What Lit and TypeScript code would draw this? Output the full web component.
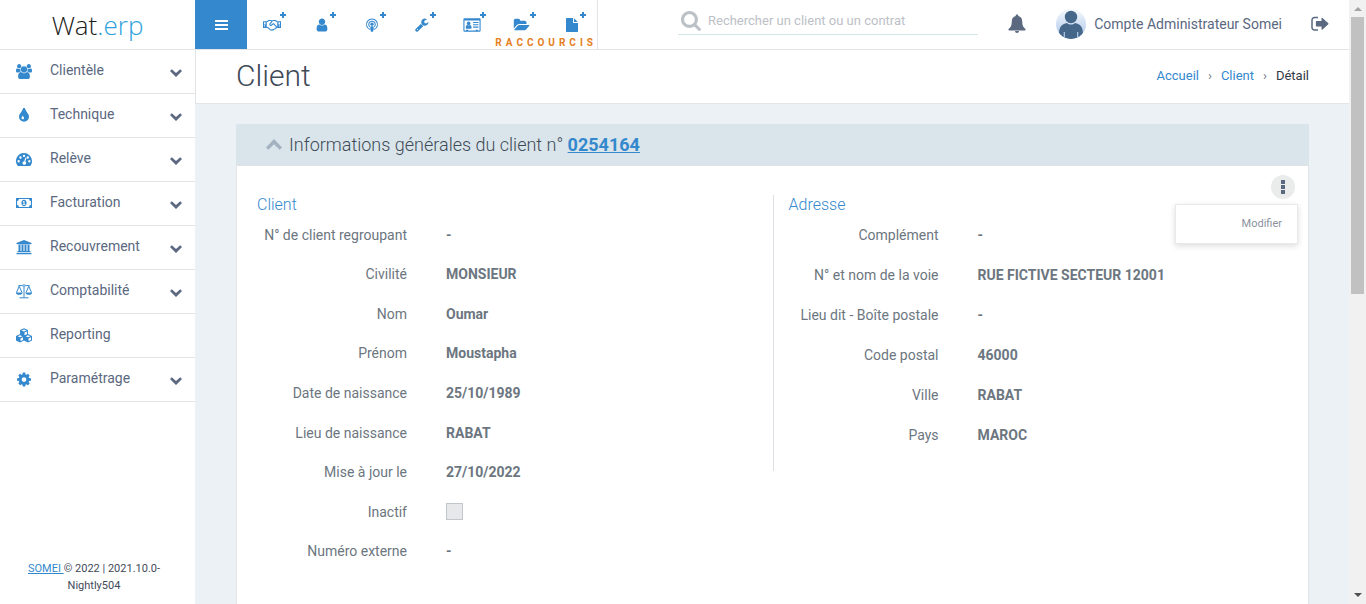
import { LitElement, html, css, svg, nothing, SVGTemplateResult } from "lit";
import { customElement, property, state } from "lit/decorators.js";

interface Glyph {
  box: string;
  body: SVGTemplateResult;
}

const glyphs: Record<string, Glyph> = {
  bars: {
    box: "0 0 13 12",
    body: svg`<path d="M0 1h13v2H0zM0 5h13v2H0zM0 9h13v2H0z"/>`,
  },
  users: {
    box: "-64 0 1920 1792",
    body: svg`<path d="M529 896q-162 5-265 128h-134q-82 0-138-40.500t-56-118.500q0-353 124-353 6 0 43.500 21t97.500 42.500 119 21.500q67 0 133-23-5 37-5 66 0 139 81 256zm1071 637q0 120-73 189.500t-194 69.500h-874q-121 0-194-69.500t-73-189.500q0-53 3.500-103.500t14-109 26.500-108.500 43-97.500 62-81 85.500-53.500 111.500-20q10 0 43 21.500t73 48 107 48 135 21.500 135-21.500 107-48 73-48 43-21.500q61 0 111.500 20t85.500 53.500 62 81 43 97.500 26.500 108.500 14 109 3.500 103.500zm-1024-1277q0 106-75 181t-181 75-181-75-75-181 75-181 181-75 181 75 75 181zm704 384q0 159-112.500 271.500t-271.500 112.500-271.500-112.500-112.500-271.500 112.500-271.500 271.500-112.500 271.500 112.500 112.500 271.500zm576 225q0 78-56 118.500t-138 40.500h-134q-103-123-265-128 81-117 81-256 0-29-5-66 66 23 133 23 59 0 119-21.500t97.500-42.500 43.500-21q124 0 124 353zm-128-609q0 106-75 181t-181 75-181-75-75-181 75-181 181-75 181 75 75 181z"/>`,
  },
  tint: {
    box: "0 128 1792 1536",
    body: svg`<path d="M896 1152q0-36-20-69-1-1-15.500-22.500t-25.500-38-25-44-21-50.500q-4-16-21-16t-21 16q-7 23-21 50.500t-25 44-25.500 38-15.500 22.500q-20 33-20 69 0 53 37.500 90.500t90.500 37.500 90.500-37.500 37.500-90.500zm512-128q0 212-150 362t-362 150-362-150-150-362q0-145 81-275 6-9 62.500-90.500t101-151 99.500-178 83-201.500q9-30 34-47t51-17 51.500 17 33.500 47q28 93 83 201.500t99.500 178 101 151 62.500 90.500q81 127 81 275z"/>`,
  },
  gauge: {
    box: "0 0 16 14",
    body: svg`<path fill-rule="evenodd" d="M8 1a7.500 7.500 0 0 1 7.500 7.500c0 1.600-.5 3.100-1.300 4.200-.2.200-.4.300-.7.300h-11c-.3 0-.5-.1-.7-.3A7.500 7.500 0 0 1 8 1zM3 7.500a1.100 1.100 0 1 0 0 2.200 1.100 1.100 0 0 0 0-2.200zM4.700 4a1.100 1.100 0 1 0 0 2.200 1.100 1.100 0 0 0 0-2.200zM8 2.500a1.100 1.100 0 1 0 0 2.200 1.100 1.100 0 0 0 0-2.200zM11.500 4a1.100 1.100 0 1 0 0 2.200 1.100 1.100 0 0 0 0-2.200zM13 7.500a1.100 1.100 0 1 0 0 2.200 1.100 1.100 0 0 0 0-2.200zM9.200 5.200 8.300 8.600A1.700 1.700 0 1 0 9.300 8.900l.9-3.400z"/>`,
  },
  money: {
    box: "-1 -1 18 14",
    body: svg`<path fill-rule="evenodd" d="M0 .5h16v10H0zM3 1.600A2 2 0 0 1 1.100 3.500v4A2 2 0 0 1 3 9.400h10a2 2 0 0 1 1.900-1.900v-4A2 2 0 0 1 13 1.600zM8 2.300c1.600 0 2.600 1.500 2.600 3.200S9.600 8.700 8 8.700 5.400 7.200 5.400 5.500 6.400 2.300 8 2.300zM7.700 3.500l-1.200 1 .5.600.6-.4v2.100h-.9v.8h2.700v-.8h-.9V3.500z"/>`,
  },
  bank: {
    box: "0 0 16 15",
    body: svg`<path d="M8 0l7.500 3v1h-1c0 .3-.2.500-.5.500H2c-.3 0-.5-.2-.5-.5h-1V3zM2.500 5h2v6h1V5h2v6h1V5h2v6h1V5h2v6h.5c.3 0 .5.200.5.500v.5h-13v-.5c0-.3.200-.5.500-.5h.5zM1 12.800h14c.3 0 .5.200.5.500v1H.5v-1c0-.3.200-.5.500-.5z"/>`,
  },
  scales: {
    box: "0 0 17 15",
    body: svg`<path fill="none" stroke="currentColor" stroke-width="1" d="M3 1.600h4.300M9.700 1.600H14M8.500 2.600v10.900M4 13.800h9M1 8.500l2.700-6.300 2.800 6.300M10.500 8.500l2.800-6.300L16 8.500"/><circle cx="8.500" cy="1.600" r="1" fill="none" stroke="currentColor" stroke-width=".8"/><path d="M.3 8.500h6.700c0 1.500-1.500 2.300-3.300 2.300S.3 10 .3 8.500zM10 8.500h6.700c0 1.500-1.500 2.300-3.300 2.300S10 10 10 8.500z"/>`,
  },
  cubes: {
    box: "0 0 18 15",
    body: svg`<path fill-rule="evenodd" d="M9 .3l3.900 1.600v4.200L17 7.900v4.500l-4 2-4-2-4 2-4-2V7.900l4.100-1.800V1.900zM9 1.400 6.500 2.400 9 3.500l2.500-1.100zM9.500 4.600v2.700l2.400-1V3.500zM5 7.200 2.600 8.200 5 9.300l2.500-1.100zM5.500 10.400v2.700l2.500-1.200V9.300zM13 7.200l-2.400 1L13 9.300l2.500-1.100zM13.500 10.400v2.700l2.500-1.200V9.300z"/>`,
  },
  cog: {
    box: "64 64 1664 1664",
    body: svg`<path d="M1152 896q0-106-75-181t-181-75-181 75-75 181 75 181 181 75 181-75 75-181zm512-109v222q0 12-8 23t-20 13l-185 28q-19 54-39 91 35 50 107 138 10 12 10 25t-9 23q-27 37-99 108t-94 71q-12 0-26-9l-138-108q-44 23-91 38-16 136-29 186-7 28-36 28h-222q-14 0-24.500-8.500t-11.500-21.500l-28-184q-49-16-90-37l-141 107q-10 9-25 9-14 0-25-11-126-114-165-168-7-10-7-23 0-12 8-23 15-21 51-66.500t54-70.500q-27-50-41-99l-183-27q-13-2-21-12.500t-8-23.500v-222q0-12 8-23t19-13l186-28q14-46 39-92-40-57-107-138-10-12-10-24 0-10 9-23 26-36 98.500-107.500t94.500-71.500q13 0 26 10l138 107q44-23 91-38 16-136 29-186 7-28 36-28h222q14 0 24.500 8.500t11.500 21.500l28 184q49 16 90 37l142-107q9-9 24-9 13 0 25 10 129 119 165 170 7 8 7 22 0 12-8 23-15 21-51 66.500t-54 70.500q26 50 41 98l183 28q13 2 21 12.500t8 23.500z"/>`,
  },
  handshake: {
    box: "0 0 20 14",
    body: svg`<path fill="none" stroke="currentColor" stroke-width="1.200" stroke-linejoin="round" d="M4 3.300 6.500 2h2.300l1.200.7L11.300 2h2.200L16 3.300M4 9.500l1.200.2 3 2.700c.8.500 1.500.4 2.200-.2.900.4 1.600.1 2-.7.900.1 1.500-.3 1.700-1.100.9 0 1.300-.7 1-1.400L11.600 5.400 9.300 7.300c-.9.500-2-.3-1.700-1.200L10 2.900M14.800 9.300H16"/><path fill-rule="evenodd" d="M0 2.700h4.200v7.600H0zM1 8a.7.700 0 1 0 1.400 0A.7.700 0 0 0 1 8zM15.800 2.700H20v7.600h-4.200zM17.600 8A.7.700 0 1 0 19 8a.7.700 0 0 0-1.400 0zM1.200 4v2.500h1.600V4zM17.200 4v2.500h1.600V4z"/>`,
  },
  user: {
    box: "128 64 1536 1664",
    body: svg`<path d="M1536 1399q0 109-62.500 187t-150.500 78h-854q-88 0-150.500-78t-62.500-187q0-85 8.500-160.500t31.500-152 58.500-131 94-89 134.500-34.500q131 128 313 128t313-128q76 0 134.500 34.500t94 89 58.500 131 31.500 152 8.500 160.500zm-256-887q0 159-112.500 271.500t-271.500 112.500-271.500-112.500-112.500-271.500 112.500-271.500 271.500-112.500 271.500 112.500 112.500 271.500z"/>`,
  },
  podcast: {
    box: "0 0 14 15",
    body: svg`<path fill="none" stroke="currentColor" stroke-width="1.100" d="M4.800 12.400A5.900 5.900 0 1 1 9.200 12.400M4.600 9.500a3.500 3.500 0 1 1 4.800 0"/><circle cx="7" cy="6.600" r="1.800"/><path d="M5.400 9.400c.8-.6 2.400-.6 3.200 0 .5.500.1 3.300-.3 4.700-.2.800-2.400.8-2.600 0-.4-1.400-.8-4.200-.3-4.700z"/>`,
  },
  wrench: {
    box: "64 64 1728 1728",
    body: svg`<path d="M448 1472q0-26-19-45t-45-19-45 19-19 45 19 45 45 19 45-19 19-45zm644-420l-682 682q-37 37-90 37-52 0-91-37l-106-108q-38-36-38-90 0-53 38-91l681-681q39 98 114.500 173.500t173.500 114.500zm634-435q0 39-23 106-47 134-164.500 217.500t-258.500 83.500q-185 0-316.500-131.500t-131.500-316.500 131.500-316.500 316.500-131.500q58 0 121.500 16.500t107.500 46.500q16 11 16 28t-16 28l-293 169v224l193 107q5-3 79-48.500t135.500-81 70.500-35.500q15 0 23.500 10t8.500 25z"/>`,
  },
  card: {
    box: "0 0 16 13",
    body: svg`<path fill-rule="evenodd" d="M1 .3h14c.6 0 1 .4 1 1v10.400c0 .6-.4 1-1 1H1c-.6 0-1-.4-1-1V1.300c0-.6.400-1 1-1zM1 2.300v9.400h14V2.300z"/><circle cx="4.900" cy="5" r="1.700"/><path d="M2.200 9.300c0-1.800.5-2.800 1.500-2.800.7.600 1.700.6 2.400 0 1 0 1.500 1 1.500 2.800 0 .4-.3.700-.7.700h-4c-.4 0-.7-.3-.7-.7zM9 3.600h5v1H9zM9 5.800h5v1H9zM9 8h5v1H9zM2.500 11h2v1h-2zM11.500 11h2v1h-2z"/>`,
  },
  folder: {
    box: "-96 128 2176 1536",
    body: svg`<path d="M1879 952q0 31-31 66l-336 396q-43 51-120.500 86.500t-143.500 35.500h-1088q-34 0-60.500-13t-26.500-43q0-31 31-66l336-396q43-51 120.500-86.500t143.500-35.500h1088q34 0 60.500 13t26.500 43zm-343-344v160h-832q-94 0-197 47.500t-164 119.500l-337 396-5 6q0-4-.5-12.500t-.5-12.500v-960q0-92 66-158t158-66h320q92 0 158 66t66 158v32h544q92 0 158 66t66 158z"/>`,
  },
  file: {
    box: "128 0 1536 1792",
    body: svg`<path d="M1152 512v-472q22 14 36 28l408 408q14 14 28 36h-472zm-128 32q0 40 28 68t68 28h544v1056q0 40-28 68t-68 28h-1344q-40 0-68-28t-28-68v-1600q0-40 28-68t68-28h800v544z"/>`,
  },
  plus: {
    box: "0 0 6 6",
    body: svg`<path d="M2 0h2v2h2v2H4v2H2V4H0V2h2z"/>`,
  },
  search: {
    box: "64 128 1664 1664",
    body: svg`<path d="M1216 832q0-185-131.500-316.500t-316.500-131.500-316.500 131.500-131.500 316.500 131.500 316.500 316.500 131.500 316.500-131.500 131.500-316.500zm512 832q0 52-38 90t-90 38q-54 0-90-38l-343-342q-179 124-399 124-143 0-273.500-55.500t-225-150-150-225-55.500-273.500 55.500-273.500 150-225 225-150 273.500-55.500 273.500 55.500 225 150 150 225 55.500 273.500q0 220-124 399l343 343q37 37 37 90z"/>`,
  },
  bell: {
    box: "0 0 18 19",
    body: svg`<path d="M9 .5c.8 0 1.300.5 1.300 1.200v.4c2.500.6 3.800 2.500 3.900 5.100.1 4 .9 6 3 7.500.7.700.3 1.800-.7 1.800H1.500c-1 0-1.400-1.100-.7-1.800 2.100-1.500 2.900-3.500 3-7.500.1-2.600 1.400-4.500 3.900-5.100v-.4C7.700 1 8.200.5 9 .5zM7 17h4a2 2 0 0 1-4 0z"/>`,
  },
  logout: {
    box: "0 0 18 16",
    body: svg`<path fill="none" stroke="currentColor" stroke-width="1.500" d="M7 1.500H3.500A2.500 2.500 0 0 0 1 4v7.500A2.500 2.500 0 0 0 3.500 14H7"/><path d="M10.500 2.300c0-.6.600-.8 1-.4l5.800 5.300c.3.300.3.700 0 1l-5.800 5.300c-.4.400-1 .2-1-.4v-2.600H5.600c-.4 0-.7-.3-.7-.7V5.600c0-.4.300-.7.700-.7h4.900z"/>`,
  },
  down: {
    box: "0 0 12 8",
    body: svg`<path d="M1.800.2 6 4.100 10.200.2 12 2 6 8 0 2z"/>`,
  },
  up: {
    box: "0 0 16 11",
    body: svg`<path d="M8 0l8 8.500-2.300 2.300L8 5.200l-5.700 5.600L0 8.500z"/>`,
  },
  kebab: {
    box: "0 0 4 14",
    body: svg`<path d="M0 0h4v4H0zM0 5h4v4H0zM0 10h4v4H0z"/>`,
  },
  avatar: {
    box: "0 0 30 30",
    body: svg`<defs><linearGradient id="sky" x1="0" y1="0" x2="0" y2="1"><stop offset="0" stop-color="#f6f9fd"/><stop offset="1" stop-color="#a9c4ea"/></linearGradient><clipPath id="disc"><circle cx="15" cy="15" r="15"/></clipPath></defs><g clip-path="url(#disc)"><path fill="url(#sky)" d="M0 0h30v30H0z"/><circle cx="15" cy="8" r="6.200" fill="#456789"/><path fill="#456789" d="M3 24.500C3.300 18 5.500 15 11 14c2.300 2 5.700 2 8 0 5.500 1 7.700 4 8 10.500L26 30H4z"/><path stroke="#b5cbea" stroke-width="1.200" d="M8.300 23v7M21.700 23v7"/></g>`,
  },
};

@customElement("wat-icon")
class WatIcon extends LitElement {
  @property() name = "";

  static styles = css`
    :host {
      display: inline-flex;
      flex: none;
    }
    .glyph {
      display: block;
      width: 100%;
      height: 100%;
      fill: currentColor;
    }
  `;

  render() {
    const glyph = glyphs[this.name];
    if (!glyph) return nothing;
    return html`<svg class="glyph" viewBox=${glyph.box} aria-hidden="true">${glyph.body}</svg>`;
  }
}

const menu = [
  { label: "Clientèle", icon: "users", nested: true },
  { label: "Technique", icon: "tint", nested: true },
  { label: "Relève", icon: "gauge", nested: true },
  { label: "Facturation", icon: "money", nested: true },
  { label: "Recouvrement", icon: "bank", nested: true },
  { label: "Comptabilité", icon: "scales", nested: true },
  { label: "Reporting", icon: "cubes", nested: false },
  { label: "Paramétrage", icon: "cog", nested: true },
];

const shortcuts = [
  { icon: "handshake", label: "Nouveau contrat" },
  { icon: "user", label: "Nouveau client" },
  { icon: "podcast", label: "Nouveau point" },
  { icon: "wrench", label: "Nouvelle intervention" },
  { icon: "card", label: "Nouveau contact" },
  { icon: "folder", label: "Nouveau dossier" },
  { icon: "file", label: "Nouveau document" },
];

const client: [string, string][] = [
  ["N° de client regroupant", "-"],
  ["Civilité", "MONSIEUR"],
  ["Nom", "Oumar"],
  ["Prénom", "Moustapha"],
  ["Date de naissance", "25/10/1989"],
  ["Lieu de naissance", "RABAT"],
  ["Mise à jour le", "27/10/2022"],
];

const address: [string, string][] = [
  ["Complément", "-"],
  ["N° et nom de la voie", "RUE FICTIVE SECTEUR 12001"],
  ["Lieu dit - Boîte postale", "-"],
  ["Code postal", "46000"],
  ["Ville", "RABAT"],
  ["Pays", "MAROC"],
];

@customElement("app-root")
class AppRoot extends LitElement {
  @state() private menuOpen = true;

  static styles = css`
    :host {
      display: grid;
      grid-template-columns: 195px minmax(0, 1fr) 17px;
      height: 100vh;
      overflow: hidden;
      background: #ecf1f5;
      color: #6c7680;
      font: 14px/20px Roboto, sans-serif;
    }
    * {
      box-sizing: border-box;
    }
    a {
      color: #3488cd;
      text-decoration: none;
    }
    button {
      padding: 0;
      border: 0;
      background: none;
      color: inherit;
      font: inherit;
      cursor: pointer;
    }

    .sidebar {
      display: flex;
      flex-direction: column;
      background: #fff;
    }
    .logo {
      display: flex;
      justify-content: center;
      align-items: center;
      height: 50px;
      border-bottom: 1px solid #e2e5e7;
      color: #1d1d1b;
      font: 300 26px/32px "Open Sans", sans-serif;
    }
    .logo-accent {
      color: #2d9fdc;
    }
    .nav {
      flex: 1;
    }
    .nav-item {
      display: grid;
      grid-template-columns: 48px 1fr 12px;
      align-items: center;
      width: 100%;
      height: 44px;
      padding-right: 13px;
      border-bottom: 1px solid #e2e5e7;
      color: #5a6880;
      text-align: left;
    }
    .nav-icon {
      justify-self: center;
      height: 15px;
      width: 18px;
      color: #3488cd;
    }
    .nav-label {
      padding: 0 0 3px 2px;
    }
    .nav-arrow {
      width: 12px;
      height: 8px;
      margin-top: 2px;
    }
    .copyright {
      padding: 10px 20px;
      margin-right: 7px;
      color: #3f4a58;
      font-size: 11px;
      line-height: 17px;
      text-align: center;
    }
    .copyright-link {
      text-decoration: underline;
    }

    .main {
      display: flex;
      flex-direction: column;
      min-width: 0;
      min-height: 0;
    }
    .topbar {
      display: flex;
      flex: none;
      height: 50px;
      border-bottom: 1px solid #e2e5e7;
      background: #fff;
    }
    .burger {
      display: flex;
      justify-content: center;
      align-items: center;
      width: 52px;
      background: #3488cd;
      color: #fff;
    }
    .burger-icon {
      width: 13px;
      height: 12px;
    }
    .shortcuts {
      display: flex;
      position: relative;
      border-right: 1px solid #e2e5e7;
      color: #3488cd;
    }
    .shortcut {
      display: flex;
      justify-content: center;
      align-items: center;
      position: relative;
      width: 50px;
    }
    .shortcut-icon {
      width: 18px;
      height: 14px;
    }
    .shortcut-plus {
      position: absolute;
      top: 12px;
      left: 33px;
      width: 6px;
      height: 6px;
    }
    .shortcuts-title {
      position: absolute;
      right: 0;
      bottom: 0;
      color: #e67e22;
      font-size: 10px;
      line-height: 12px;
      font-weight: 700;
      letter-spacing: 4px;
    }
    .search {
      display: flex;
      align-items: center;
      gap: 7px;
      width: 300px;
      height: 28px;
      margin: 7px 0 0 80px;
      padding: 0 3px;
      border-bottom: 1px solid #d0e4ea;
      color: #bcc1c7;
    }
    .search-icon {
      width: 20px;
      height: 20px;
    }
    .search-input {
      flex: 1;
      min-width: 0;
      padding: 1px 0 0;
      border: 0;
      outline: 0;
      background: none;
      color: #5a6880;
      font: 13px/20px Roboto, sans-serif;
    }
    .search-input::placeholder {
      color: #bcc1c7;
    }
    .account {
      display: flex;
      align-items: center;
      margin-left: auto;
      padding: 0 20px 2px 0;
      color: #5a6880;
    }
    .account-action {
      display: flex;
    }
    .bell-icon {
      width: 18px;
      height: 19px;
    }
    .account-user {
      display: flex;
      align-items: center;
      gap: 8px;
      margin: 0 29px 0 30px;
      color: #5a6880;
    }
    .avatar {
      width: 30px;
      height: 30px;
    }
    .logout-icon {
      width: 18px;
      height: 16px;
    }

    .titlebar {
      display: flex;
      flex: none;
      justify-content: space-between;
      align-items: center;
      height: 54px;
      padding: 0 40px 1px;
      border-bottom: 1px solid #e2e5e7;
      border-left: 1px solid #e2e5e7;
      background: #fff;
    }
    .title {
      margin: 0;
      color: #3f4a58;
      font-size: 30px;
      line-height: 36px;
      font-weight: 300;
    }
    .crumbs {
      display: flex;
      gap: 9px;
      font-size: 13px;
    }
    .crumb-current {
      color: #333b45;
    }
    .content {
      flex: 1;
      display: flex;
      flex-direction: column;
      min-height: 0;
      padding: 20px 40px 0 41px;
    }
    .panel-head {
      display: flex;
      flex: none;
      align-items: center;
      gap: 7px;
      height: 42px;
      padding: 0 30px;
      border-bottom: 1px solid #e2e2e6;
      border-radius: 2px 2px 0 0;
      background: #d9e5ea;
      color: #3f4a58;
    }
    .panel-toggle {
      display: flex;
      color: #a3b1c0;
    }
    .panel-arrow {
      width: 16px;
      height: 11px;
    }
    .panel-title {
      margin: 0;
      font-size: 18px;
      line-height: 24px;
      font-weight: 300;
    }
    .panel-link {
      font-weight: 700;
      text-decoration: underline;
    }
    .panel-body {
      flex: 1 0 auto;
      display: grid;
      grid-template-columns: 1fr 1fr;
      align-items: start;
      position: relative;
      padding: 29px 20px 60px;
      border: 1px solid #e2e5e7;
      border-top: 0;
      background: #fff;
    }
    .side {
      padding: 0 0 16px 15px;
      border-left: 1px solid #dcdfe3;
    }
    .group-title {
      margin: 0;
      color: #3488cd;
      font-size: 16px;
      line-height: 20px;
      font-weight: 300;
    }
    .fields {
      display: grid;
      grid-auto-rows: 1fr;
      margin: 0;
    }
    .fields-client {
      min-height: 356px;
    }
    .fields-address {
      min-height: 240px;
    }
    .field {
      display: grid;
      grid-template-columns: 150px 1fr;
      align-items: center;
      gap: 39px;
    }
    .term {
      text-align: right;
    }
    .value {
      display: flex;
      margin: 0;
      font-weight: 700;
    }
    .check {
      appearance: none;
      width: 17px;
      height: 17px;
      margin: 0;
      border: 1px solid #c1c6cb;
      background: #e6e8ea;
    }
    .more {
      display: flex;
      justify-content: center;
      align-items: center;
      position: absolute;
      top: 9px;
      right: 13px;
      width: 24px;
      height: 24px;
      border-radius: 50%;
      background: #eaebeb;
      color: #5a6880;
    }
    .more-icon {
      width: 4px;
      height: 14px;
    }
    .menu {
      position: absolute;
      top: 38px;
      right: 10px;
      display: flex;
      justify-content: flex-end;
      width: 123px;
      padding: 9px 15px;
      border: 1px solid #e8e9eb;
      background: #fff;
      box-shadow: 0 2px 6px rgba(0, 0, 0, 0.14);
    }
    .menu-item {
      color: #8a929e;
      font-size: 11px;
      line-height: 20px;
    }

    .scrollbar {
      display: flex;
      flex-direction: column;
      align-items: center;
      padding: 7px 2px;
      background: #f1f1f1;
    }
    .scroll-up,
    .scroll-down {
      width: 0;
      height: 0;
      border: 4px solid transparent;
    }
    .scroll-up {
      border-top: 0;
      border-bottom-color: #a3a3a3;
    }
    .scroll-down {
      margin-top: auto;
      border-bottom: 0;
      border-top-color: #505050;
    }
    .scroll-thumb {
      width: 100%;
      height: 47%;
      margin-top: 6px;
      background: #c1c1c1;
    }
  `;

  private fields(rows: [string, string][]) {
    return rows.map(
      ([term, value]) => html`
        <div class="field">
          <dt class="term">${term}</dt>
          <dd class="value">${value}</dd>
        </div>
      `
    );
  }

  render() {
    return html`
      <aside class="sidebar">
        <div class="logo"><span>Wat<span class="logo-accent">.erp</span></span></div>
        <nav class="nav">
          ${menu.map(
            (item) => html`
              <button class="nav-item">
                <wat-icon class="nav-icon" name=${item.icon}></wat-icon>
                <span class="nav-label">${item.label}</span>
                ${item.nested ? html`<wat-icon class="nav-arrow" name="down"></wat-icon>` : nothing}
              </button>
            `
          )}
        </nav>
        <footer class="copyright">
          <a class="copyright-link" href="#">SOMEI </a>© 2022 | 2021.10.0-Nightly504
        </footer>
      </aside>

      <div class="main">
        <header class="topbar">
          <button class="burger" aria-label="Menu">
            <wat-icon class="burger-icon" name="bars"></wat-icon>
          </button>
          <div class="shortcuts">
            ${shortcuts.map(
              (item) => html`
                <button class="shortcut" aria-label=${item.label}>
                  <wat-icon class="shortcut-icon" name=${item.icon}></wat-icon>
                  <wat-icon class="shortcut-plus" name="plus"></wat-icon>
                </button>
              `
            )}
            <span class="shortcuts-title">RACCOURCIS</span>
          </div>
          <label class="search">
            <wat-icon class="search-icon" name="search"></wat-icon>
            <input
              class="search-input"
              type="text"
              aria-label="Rechercher"
              placeholder="Rechercher un client ou un contrat"
            />
          </label>
          <div class="account">
            <button class="account-action" aria-label="Notifications">
              <wat-icon class="bell-icon" name="bell"></wat-icon>
            </button>
            <a class="account-user" href="#">
              <wat-icon class="avatar" name="avatar"></wat-icon>
              <span>Compte Administrateur Somei</span>
            </a>
            <button class="account-action" aria-label="Déconnexion">
              <wat-icon class="logout-icon" name="logout"></wat-icon>
            </button>
          </div>
        </header>

        <div class="titlebar">
          <h1 class="title">Client</h1>
          <nav class="crumbs">
            <a href="#">Accueil</a><span>›</span><a href="#">Client</a><span>›</span>
            <span class="crumb-current">Détail</span>
          </nav>
        </div>

        <main class="content">
          <div class="panel-head">
            <button class="panel-toggle" aria-label="Replier">
              <wat-icon class="panel-arrow" name="up"></wat-icon>
            </button>
            <h2 class="panel-title">
              Informations générales du client n° <a class="panel-link" href="#">0254164</a>
            </h2>
          </div>
          <div class="panel-body">
            <section>
              <h3 class="group-title">Client</h3>
              <dl class="fields fields-client">
                ${this.fields(client)}
                <div class="field">
                  <dt class="term"><label for="inactive">Inactif</label></dt>
                  <dd class="value"><input class="check" id="inactive" type="checkbox" disabled /></dd>
                </div>
                ${this.fields([["Numéro externe", "-"]])}
              </dl>
            </section>
            <section class="side">
              <h3 class="group-title">Adresse</h3>
              <dl class="fields fields-address">${this.fields(address)}</dl>
            </section>
            <button
              class="more"
              aria-label="Actions"
              @click=${() => (this.menuOpen = !this.menuOpen)}
            >
              <wat-icon class="more-icon" name="kebab"></wat-icon>
            </button>
            ${this.menuOpen
              ? html`<div class="menu"><button class="menu-item">Modifier</button></div>`
              : nothing}
          </div>
        </main>
      </div>

      <div class="scrollbar" aria-hidden="true">
        <span class="scroll-up"></span>
        <span class="scroll-thumb"></span>
        <span class="scroll-down"></span>
      </div>
    `;
  }
}
